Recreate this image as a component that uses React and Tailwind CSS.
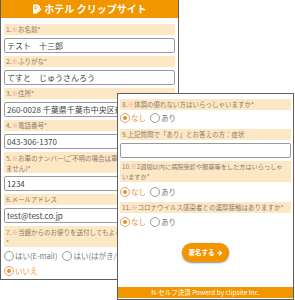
import React from "react";

const Label = ({ num, mark = true, children, two = false, size = "text-[6.5px]" }) => (
  <div
    className={`bg-[#fde8c6] px-[2px] ${size} text-[#8c7b6a] whitespace-nowrap overflow-hidden ${
      two ? "h-[21px] pt-[1px] leading-[10px]" : "h-[11px] leading-[11px]"
    }`}
  >
    {num}
    {mark && <span className="text-[#f4a09a]">※</span>}
    {children}
  </div>
);

const Input = ({ value }) => (
  <div className="mt-[3px] h-[15px] border border-[#9a9a9a] rounded-[2px] bg-white px-[2px] text-[8px] leading-[13px] text-[#444] whitespace-nowrap overflow-hidden">
    {value}
  </div>
);

const Radio = ({ label, checked }) => (
  <div className="flex items-center gap-[1px]">
    <div
      className={`w-[10px] h-[10px] rounded-full border bg-white flex items-center justify-center shrink-0 ${
        checked ? "border-[#e0a07a]" : "border-[#9a9a9a]"
      }`}
    >
      {checked && <div className="w-[4px] h-[4px] rounded-full bg-[#f28c1e]" />}
    </div>
    <span
      className={`text-[7.5px] leading-[10px] whitespace-nowrap ${
        checked ? "text-[#f39233]" : "text-[#777]"
      }`}
    >
      {label}
    </span>
  </div>
);

export default function App() {
  return (
    <div className="relative w-[295px] h-[300px] bg-white overflow-hidden font-['Noto_Sans_CJK_JP','Noto_Sans',sans-serif]">
      {/* Left screen */}
      <div className="absolute left-0 top-0 w-[179px] h-[280px] bg-white border-x border-b border-[#5e5e5e] overflow-hidden">
        <div className="h-[18px] bg-[#f29600] flex items-center justify-center gap-[2px] text-white font-bold text-[10px] leading-none">
          <svg width="10" height="11" viewBox="0 0 10 11" fill="none">
            <path d="M1 0.5h5l2 2v2.5L5 8v1.5H1z" fill="white" />
            <path d="M8.8 4.2l0.9 0.9-4 4H4.8v-0.9z" fill="white" />
            <path d="M2 3h3.5M2 4.8h3" stroke="#f29600" strokeWidth="0.8" />
          </svg>
          <span>ホテル クリップサイト</span>
        </div>
        <div className="px-[3px] pt-[6px] flex flex-col gap-[3px]">
          <div className="flex flex-col">
            <Label num="1.">お名前*</Label>
            <Input value="テスト　十三郎" />
          </div>
          <div className="flex flex-col">
            <Label num="2.">ふりがな*</Label>
            <Input value="てすと　じゅうさんろう" />
          </div>
          <div className="flex flex-col">
            <Label num="3.">住所*</Label>
            <Input value="260-0028 千葉県千葉市中央区新町1-2-3" />
          </div>
          <div className="flex flex-col">
            <Label num="4.">電話番号*</Label>
            <Input value="043-306-1370" />
          </div>
          <div className="flex flex-col">
            <Label num="5." two>
              お車のナンバー(ご不明の場合は車種のみでもかまい
              <br />
              ません)*
            </Label>
            <Input value="1234" />
          </div>
          <div className="flex flex-col">
            <Label num="6." mark={false}>メールアドレス</Label>
            <Input value="test@test.co.jp" />
          </div>
          <div className="flex flex-col">
            <Label num="7." two>
              当館からのお便りを送付してもよろしいでしょうか？
              <br />*
            </Label>
            <div className="mt-[4px] flex gap-[5px]">
              <Radio label="はい(E-mail)" />
              <Radio label="はい(はがき/DM)" />
            </div>
            <div className="mt-[5px] flex">
              <Radio label="いいえ" checked />
            </div>
          </div>
        </div>
      </div>

      {/* Right screen */}
      <div className="absolute left-[117px] top-[93px] w-[177px] h-[207px] bg-white border border-[#5e5e5e] flex flex-col">
        <div className="px-[2px] pt-[5px] flex flex-col">
          <Label num="8.">体調の優れない方はいらっしゃいますか*</Label>
          <div className="mt-[3px] flex gap-[4px]">
            <Radio label="なし" checked />
            <Radio label="あり" />
          </div>
          <div className="mt-[6px]">
            <Label num="9." mark={false}>上記質問で「あり」とお答えの方：症状</Label>
          </div>
          <Input value="" />
          <div className="mt-[3px]">
            <Label num="10." two size="text-[6.2px]">
              2週間以内に病院受診や服薬等をした方はいらっしゃ
              <br />
              いますか*
            </Label>
          </div>
          <div className="mt-[5px] flex gap-[4px]">
            <Radio label="なし" checked />
            <Radio label="あり" />
          </div>
          <div className="mt-[5px]">
            <Label num="11.">コロナウイルス感染者との濃厚接触はありますか*</Label>
          </div>
          <div className="mt-[4px] flex gap-[4px]">
            <Radio label="なし" checked />
            <Radio label="あり" />
          </div>
          <div className="mt-[16px] flex justify-center">
            <div className="h-[19px] w-[47px] rounded-full bg-[#f29600] shadow-[0_1px_2px_rgba(0,0,0,0.45)] flex items-center justify-center gap-[2px] text-white font-bold text-[6.5px] leading-none">
              <span>署名する</span>
              <svg width="6" height="6" viewBox="0 0 6 6">
                <path d="M0.5 3h3.6M2.6 1.2L4.5 3 2.6 4.8" stroke="white" strokeWidth="1.2" fill="none" strokeLinecap="round" strokeLinejoin="round" />
              </svg>
            </div>
          </div>
        </div>
        <div className="mt-auto mb-[1px] h-[11px] bg-[#f29600] flex items-center justify-center text-white text-[6.5px] leading-none whitespace-nowrap">
          N-セルフ決済 Powerd by clipsite Inc.
        </div>
      </div>
    </div>
  );
}
